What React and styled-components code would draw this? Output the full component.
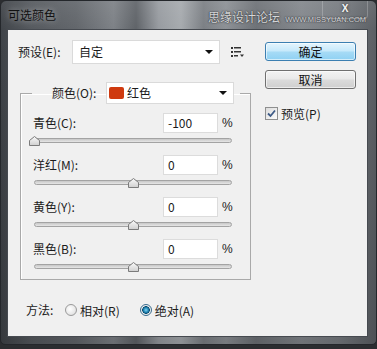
import styled, { createGlobalStyle } from 'styled-components'

const GlobalStyle = createGlobalStyle`
* {
  box-sizing: border-box;
  margin: 0;
  padding: 0;
}
body {
  background: #2b2d30;
  font-family: "Noto Sans CJK SC", "Noto Sans", sans-serif;
  font-size: 12px;
  color: #1b1b1b;
}
`

const Window = styled.div`
  position: relative;
  width: 377px;
  height: 345px;
  border: 1px solid #24272b;
  border-radius: 6px 6px 5px 5px;
  overflow: hidden;
  display: flex;
  flex-direction: column;
  background:
    linear-gradient(180deg, rgba(255,255,255,0.08) 0%, rgba(0,0,0,0) 30px, rgba(0,0,0,0.15) 100%),
    linear-gradient(90deg, #3f4348 0%, #55595e 8%, #62666b 20%, #7d8186 30%, #5f6368 36%,
      #979ba0 42%, #a6aaae 48%, #7b7f84 54%, #8c9095 60%, #6d7176 68%, #83878c 80%, #777b80 90%, #5b5f64 100%);
`

const TitleBar = styled.div`
  height: 28px;
  display: flex;
  align-items: center;
  padding-left: 7px;
`

const Title = styled.span`
  font-size: 12px;
  line-height: 16px;
  color: #111;
  text-shadow: 0 0 6px rgba(255, 255, 255, 0.55);
`

const Watermark = styled.div`
  margin-left: auto;
  margin-right: 10px;
  padding-top: 3px;
  display: flex;
  align-items: baseline;
  gap: 5px;
  color: #d6d7d9;
  text-shadow: 0 0 1px #303236, 0 0 2px #303236;
`

const WatermarkCn = styled.span`
  font-size: 12px;
  line-height: 16px;
`

const WatermarkEn = styled.span`
  font-family: "Liberation Sans", sans-serif;
  font-size: 7.5px;
  letter-spacing: -0.05px;
  line-height: 10px;
`

const CloseButton = styled.div`
  position: absolute;
  top: 0;
  right: 8px;
  width: 46px;
  height: 18px;
  border: 1px solid rgba(255, 255, 255, 0.22);
  border-top: none;
  border-radius: 0 0 4px 4px;
  display: flex;
  justify-content: center;
  padding-top: 2px;
  color: #f4f4f4;
  font-family: "Liberation Sans", sans-serif;
  font-weight: bold;
  font-size: 10px;
  line-height: 11px;
  text-shadow: 0 0 3px #222;
`

const Client = styled.div`
  margin-left: 6px;
  width: 361px;
  height: 308px;
  border: 1px solid #464a50;
  background: #f0f0f0;
  padding: 10px 0 0 10px;
  display: flex;
  align-items: flex-start;
`

const LeftCol = styled.div`
  width: 227px;
  display: flex;
  flex-direction: column;
`

const RightCol = styled.div`
  margin-left: 20px;
  width: 91px;
  display: flex;
  flex-direction: column;
  padding-top: 2px;
`

const PresetRow = styled.div`
  height: 24px;
  display: flex;
  align-items: center;
`

const Label = styled.span`
  width: ${p => p.w}px;
  flex-shrink: 0;
  line-height: 16px;
  white-space: nowrap;
`

const Select = styled.div`
  width: ${p => p.w}px;
  height: ${p => p.h}px;
  background: #fff;
  border: 1px solid #dadada;
  display: flex;
  align-items: center;
  padding: 0 5px 0 ${p => p.pl}px;
  line-height: 16px;
`

const SelectText = styled.span`
  flex: 1;
`

const Swatch = styled.span`
  width: 15px;
  height: 12px;
  border-radius: 2px;
  background: #cf3a0f;
  margin-right: 3px;
`

const Arrow = styled.span`
  width: 0;
  height: 0;
  border-left: 4px solid transparent;
  border-right: 4px solid transparent;
  border-top: 4px solid #111;
  margin-right: 1px;
`

const MenuIcon = styled.svg`
  margin-left: 11px;
  flex-shrink: 0;
`

const Group = styled.fieldset`
  margin: 18px 0 0 2px;
  width: 225px;
  border: 1px solid #a9a9a9;
  box-shadow: inset 1px 1px 0 #fff;
  padding: 9px 10px 0 12px;
`

const Legend = styled.legend`
  margin-left: -1px;
  padding: 0 6px 0 20px;
`

const LegendInner = styled.div`
  display: flex;
  align-items: center;
`

const Row = styled.div`
  height: 42px;
  display: flex;
  flex-direction: column;
  &:last-child {
    height: 40px;
  }
`

const InputLine = styled.div`
  height: 20px;
  display: flex;
  align-items: center;
`

const NumberBox = styled.div`
  width: 55px;
  height: 20px;
  background: #fff;
  border: 1px solid #dcdcdc;
  padding-left: 4px;
  line-height: 18px;
`

const Percent = styled.span`
  margin-left: 4px;
  width: 12px;
  font-family: "Liberation Sans", sans-serif;
  font-size: 12px;
  line-height: 16px;
  color: #222;
`

const SliderLine = styled.div`
  position: relative;
  height: 22px;
`

const Track = styled.div`
  margin: 5px 0 0 1px;
  width: 198px;
  height: 5px;
  border: 1px solid #a3a3a3;
  border-radius: 3px;
  background: linear-gradient(180deg, #c7c7c7, #e6e6e6);
`

const Thumb = styled.svg`
  position: absolute;
  top: 3px;
`

const MethodRow = styled.div`
  margin: 22px 0 0 8px;
  height: 16px;
  display: flex;
  align-items: center;
`

const RadioOption = styled.div`
  display: flex;
  align-items: center;
  gap: 3px;
  margin-left: ${p => p.ml}px;
`

const Radio = styled.span`
  width: 12px;
  height: 12px;
  border-radius: 50%;
  border: 1px solid ${p => (p.checked ? '#3a6d8f' : '#9a9a9a')};
  background: ${p =>
    p.checked
      ? 'radial-gradient(circle at 50% 50%, #7fd6f5 0, #1d7fae 2.5px, #0c4c70 3.6px, #e9e9e9 4px, #fefefe 100%)'
      : 'radial-gradient(circle at 40% 40%, #ffffff 0, #e8e8e8 60%, #cfcfcf 100%)'};
`

const Button = styled.div`
  height: 19px;
  margin-top: ${p => p.mt}px;
  border-radius: 3px;
  border: 1px solid ${p => (p.primary ? '#3c7fb1' : '#707070')};
  background: ${p =>
    p.primary
      ? 'linear-gradient(180deg, #e5f5fd 0%, #c6e9fb 48%, #a7dbf6 52%, #8fd1f3 100%)'
      : 'linear-gradient(180deg, #f3f3f3 0%, #e9e9e9 48%, #dbdbdb 52%, #cfcfcf 100%)'};
  box-shadow: inset 0 0 0 1px rgba(255, 255, 255, 0.6);
  display: flex;
  align-items: center;
  justify-content: center;
  line-height: 16px;
  color: #111;
`

const CheckRow = styled.div`
  margin-top: 16px;
  display: flex;
  align-items: center;
  gap: 3px;
`

const CheckBox = styled.span`
  width: 13px;
  height: 13px;
  border: 1px solid #8e8f8f;
  background: linear-gradient(135deg, #dcdcdc, #fbfbfb);
  display: flex;
  align-items: center;
  justify-content: center;
`

const channels = [
  { label: '青色(C):', value: -100 },
  { label: '洋红(M):', value: 0 },
  { label: '黄色(Y):', value: 0 },
  { label: '黑色(B):', value: 0 },
]

const App = () => {
  return (
    <>
      <GlobalStyle />
      <Window>
        <TitleBar>
          <Title>可选颜色</Title>
          <Watermark>
            <WatermarkCn>思缘设计论坛</WatermarkCn>
            <WatermarkEn>WWW.MISSYUAN.COM</WatermarkEn>
          </Watermark>
        </TitleBar>
        <CloseButton>X</CloseButton>

        <Client>
          <LeftCol>
            <PresetRow>
              <Label w={54}>预设(E):</Label>
              <Select w={150} h={24} pl={6}>
                <SelectText>自定</SelectText>
                <Arrow />
              </Select>
              <MenuIcon width="14" height="12" viewBox="0 0 14 12">
                <rect x="0" y="1" width="2" height="2" fill="#333" />
                <rect x="3" y="1" width="7" height="1.5" fill="#333" />
                <rect x="0" y="5" width="2" height="2" fill="#333" />
                <rect x="3" y="5" width="7" height="1.5" fill="#333" />
                <rect x="0" y="9" width="2" height="2" fill="#333" />
                <rect x="3" y="9" width="4" height="1.5" fill="#333" />
                <path d="M9 8.5 L13 8.5 L11 11 Z" fill="#333" />
              </MenuIcon>
            </PresetRow>

            <Group>
              <Legend>
                <LegendInner>
                  <Label w={54}>颜色(O):</Label>
                  <Select w={128} h={22} pl={2}>
                    <Swatch />
                    <SelectText>红色</SelectText>
                    <Arrow />
                  </Select>
                </LegendInner>
              </Legend>

              {channels.map(c => (
                <Row key={c.label}>
                  <InputLine>
                    <Label w={130}>{c.label}</Label>
                    <NumberBox>{c.value}</NumberBox>
                    <Percent>%</Percent>
                  </InputLine>
                  <SliderLine>
                    <Track />
                    <Thumb
                      width="11"
                      height="10"
                      viewBox="0 0 11 10"
                      style={{ left: Math.round(1 + ((c.value + 100) / 200) * 198 - 5.5) }}
                    >
                      <defs>
                        <linearGradient id="thumbFill" x1="0" y1="0" x2="0" y2="1">
                          <stop offset="0" stopColor="#fafafa" />
                          <stop offset="1" stopColor="#cfcfcf" />
                        </linearGradient>
                      </defs>
                      <path d="M0.5 9.5 L0.5 4.5 L5.5 0.5 L10.5 4.5 L10.5 9.5 Z" fill="url(#thumbFill)" stroke="#7b7b7b" />
                    </Thumb>
                  </SliderLine>
                </Row>
              ))}
            </Group>

            <MethodRow>
              <Label w={28}>方法:</Label>
              <RadioOption ml={11}>
                <Radio />
                <span>相对(R)</span>
              </RadioOption>
              <RadioOption ml={20}>
                <Radio checked />
                <span>绝对(A)</span>
              </RadioOption>
            </MethodRow>
          </LeftCol>

          <RightCol>
            <Button primary mt={0}>确定</Button>
            <Button mt={9}>取消</Button>
            <CheckRow>
              <CheckBox>
                <svg width="9" height="9" viewBox="0 0 9 9">
                  <path d="M1 4.5 L3.5 7 L8 1.5" fill="none" stroke="#3d5a86" strokeWidth="1.8" />
                </svg>
              </CheckBox>
              <span>预览(P)</span>
            </CheckRow>
          </RightCol>
        </Client>
      </Window>
    </>
  )
}

export default App
